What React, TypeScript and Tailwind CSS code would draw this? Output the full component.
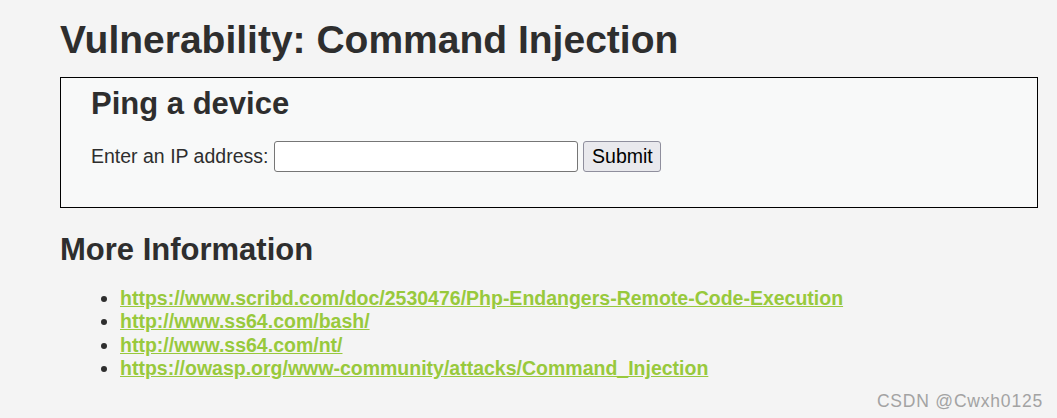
import React from "react";

const links = [
  "https://www.scribd.com/doc/2530476/Php-Endangers-Remote-Code-Execution",
  "http://www.ss64.com/bash/",
  "http://www.ss64.com/nt/",
  "https://owasp.org/www-community/attacks/Command_Injection",
];

export default function App() {
  return (
    <div
      className="relative min-h-[418px] w-full bg-[#f4f4f4] text-[#2e2e2e] pl-[60px] pr-[19px] pt-[17px]"
      style={{ fontFamily: '"Liberation Sans", Arial, sans-serif' }}
    >
      <h1 className="text-[39px] leading-[45px] font-bold">Vulnerability: Command Injection</h1>

      <div className="mt-[15px] border border-black bg-[#f8f9f9] pl-[30px] pt-[8px] pb-[35px]">
        <h2 className="text-[31px] leading-[36px] font-bold">Ping a device</h2>
        <form className="mt-[19px] flex items-center" onSubmit={(e) => e.preventDefault()}>
          <label className="text-[19.5px] leading-[23px]">Enter an IP address:</label>
          <input
            type="text"
            className="ml-[6px] h-[31px] w-[304px] rounded-[3px] border border-[#767676] bg-white px-1 text-[19px] outline-none"
          />
          <button
            type="submit"
            className="ml-[5px] h-[31px] w-[78px] rounded-[3px] border border-[#8f8f9d] bg-[#e9e9ed] text-[19.5px] leading-[23px] text-black"
          >
            Submit
          </button>
        </form>
      </div>

      <h2 className="mt-[24px] text-[31px] leading-[36px] font-bold">More Information</h2>
      <ul className="mt-[19px] list-disc pl-[60px] text-[19.5px] leading-[23.3px]">
        {links.map((l) => (
          <li key={l}>
            <a href={l} className="font-bold text-[#98c93c] underline">
              {l}
            </a>
          </li>
        ))}
      </ul>

      <div className="absolute right-[14px] bottom-[7px] text-[17.5px] leading-[20px] text-[#a3a3a3] tracking-[0.8px]">
        CSDN @Cwxh0125
      </div>
    </div>
  );
}
